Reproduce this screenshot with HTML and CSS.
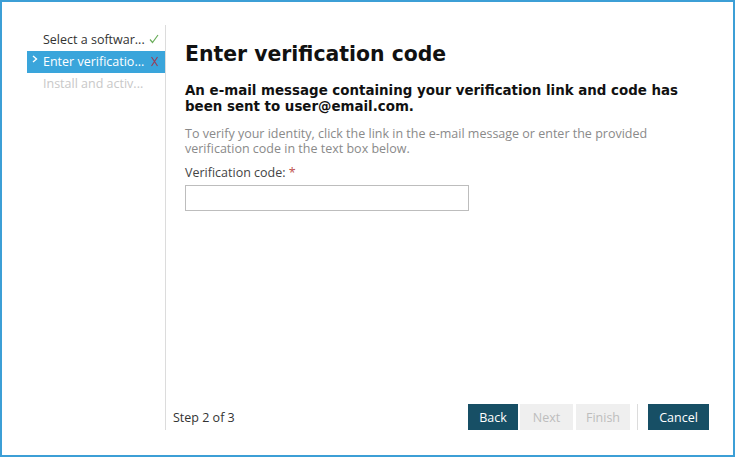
FILE: index.html
```html
<!DOCTYPE html>
<html lang="en">
<head>
  <meta charset="UTF-8">
  <title>Activate</title>
  <link rel="stylesheet" href="styles.css">
</head>
<body>
  <div class="window">
    <div class="steps">
      <div class="step done">
        <span class="step-label">Select a softwar...</span>
        <svg class="mark" width="10" height="10" viewBox="0 0 10 10"><polyline points="1,5.5 3.5,8.5 9,1" fill="none" stroke="#6aad5a" stroke-width="1.2"/></svg>
      </div>
      <div class="step current">
        <svg class="chevron" width="6" height="8" viewBox="0 0 6 8"><polyline points="1,1 4.5,4 1,7" fill="none" stroke="#fff" stroke-width="1.4"/></svg>
        <span class="step-label">Enter verificatio...</span>
        <svg class="mark" width="9" height="11" viewBox="0 0 9 11"><path d="M1.5 1 L7.5 10 M7.5 1 L1.5 10" fill="none" stroke="#9b3b55" stroke-width="1.1"/></svg>
      </div>
      <div class="step todo">
        <span class="step-label">Install and activ...</span>
      </div>
    </div>

    <div class="main">
      <div class="content">
        <h1>Enter verification code</h1>
        <h2>An e-mail message containing your verification link and code has been sent to user@email.com.</h2>
        <p class="hint">To verify your identity, click the link in the e-mail message or enter the provided verification code in the text box below.</p>
        <label class="field-label" for="code">Verification code: <span class="req">*</span></label>
        <input type="text" id="code" class="code-input">
      </div>

      <div class="footer">
        <span class="step-count">Step 2 of 3</span>
        <div class="buttons">
          <button class="btn primary">Back</button>
          <button class="btn disabled">Next</button>
          <button class="btn disabled">Finish</button>
          <span class="sep"></span>
          <button class="btn primary">Cancel</button>
        </div>
      </div>
    </div>
  </div>
</body>
</html>
```

FILE: styles.css
```css
body {
  margin: 0;
  font-family: 'Open Sans', 'Noto Sans', sans-serif;
  background: #fff;
  color: #333;
}
.window {
  width: 735px;
  height: 457px;
  box-sizing: border-box;
  border: 2px solid #3c9fd6;
  padding: 23px 24px 25px 25px;
  display: flex;
}
.steps {
  width: 138px;
  border-right: 1px solid #dcdcdc;
  padding-top: 4px;
  flex-shrink: 0;
}
.step {
  height: 22px;
  box-sizing: border-box;
  padding-bottom: 2px;
  display: flex;
  align-items: center;
  padding-left: 16px;
  position: relative;
  font-size: 12.5px;
}
.step-label {
  flex: 1;
  white-space: nowrap;
}
.step .mark {
  margin-right: 6px;
}
.step.current {
  background: #3aa5db;
  color: #fff;
}
.step .chevron {
  position: absolute;
  left: 5px;
  top: 4px;
}
.step.todo {
  color: #c8c8c8;
}
.main {
  flex: 1;
  display: flex;
  flex-direction: column;
}
.content {
  flex: 1;
  padding-left: 19px;
}
h1 {
  font-family: 'DejaVu Sans', Verdana, sans-serif;
  font-size: 20.4px;
  line-height: 24px;
  margin: 17px 0 0;
  color: #111;
}
h2 {
  font-family: 'DejaVu Sans', Verdana, sans-serif;
  font-size: 13.4px;
  line-height: 16px;
  margin: 17px 0 0;
  color: #111;
}
.hint {
  font-size: 12.5px;
  line-height: 14.5px;
  color: #8a8a8a;
  margin: 12px 0 0;
}
.field-label {
  display: block;
  font-size: 12.5px;
  line-height: 14px;
  color: #444;
  margin-top: 10px;
}
.req {
  color: #c0504d;
}
.code-input {
  display: block;
  margin-top: 5px;
  width: 284px;
  height: 26px;
  box-sizing: border-box;
  border: 1px solid #bdbdbd;
  padding: 0 6px;
}
.footer {
  display: flex;
  align-items: center;
  justify-content: space-between;
  padding-left: 7px;
  height: 26px;
}
.step-count {
  font-size: 12.5px;
  color: #333;
}
.buttons {
  display: flex;
  align-items: center;
}
.btn {
  font-family: 'Open Sans', 'Noto Sans', sans-serif;
  font-size: 12.5px;
  height: 26px;
  border: none;
  padding: 0;
  margin-left: 2px;
}
.btn.primary {
  background: #174f65;
  color: #fff;
}
.btn.disabled {
  background: #efefef;
  color: #bdbdbd;
}
.buttons .btn:nth-child(1) { width: 50px; }
.buttons .btn:nth-child(2) { width: 53px; }
.buttons .btn:nth-child(3) { width: 54px; margin-left: 3px; }
.buttons .btn:nth-child(5) { width: 61px; margin-left: 0; }
.sep {
  width: 1px;
  height: 26px;
  background: #dcdcdc;
  margin: 0 10px 0 7px;
}
```
